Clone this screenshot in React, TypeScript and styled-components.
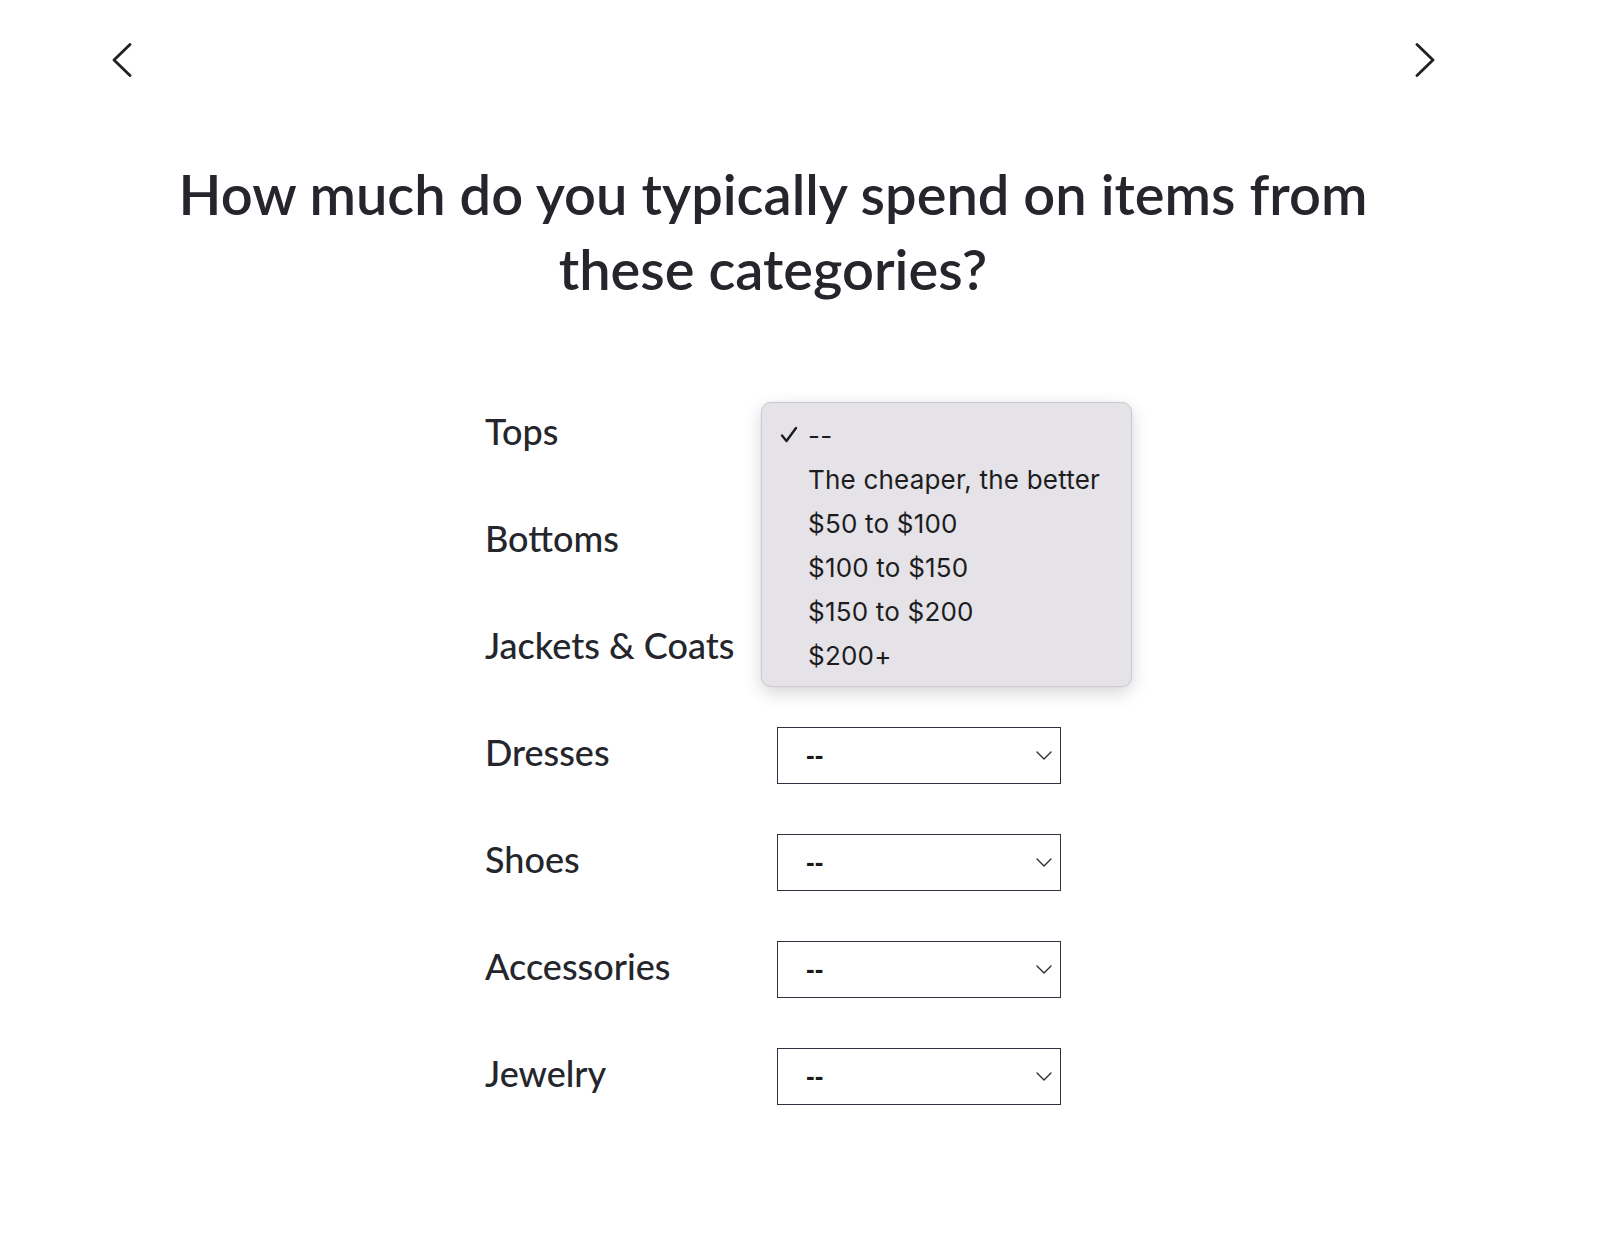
import React from "react";
import styled, { createGlobalStyle } from "styled-components";

const GlobalStyle = createGlobalStyle`
  html, body {
    margin: 0;
    padding: 0;
    background: #ffffff;
  }
  body {
    font-family: "Lato", "Noto Sans", sans-serif;
    color: #24262c;
  }
`;

const Page = styled.div`
  width: 1546px;
  min-height: 1234px;
  display: flex;
  flex-direction: column;
  align-items: center;
`;

const Nav = styled.nav`
  align-self: stretch;
  height: 120px;
  padding: 0 111px 0 112px;
  display: flex;
  align-items: center;
  justify-content: space-between;
`;

const NavButton = styled.button`
  border: 0;
  background: transparent;
  padding: 0;
  width: 20px;
  height: 34px;
  display: flex;
  align-items: center;
  justify-content: center;
  cursor: pointer;
  color: #1f2127;
`;

const Title = styled.h1`
  margin: 36px 0 0;
  font-size: 56px;
  line-height: 75px;
  font-weight: 600;
  text-align: center;
  color: #24262c;
  letter-spacing: 0;
`;

const Form = styled.div`
  margin-top: 100px;
  display: grid;
  grid-template-columns: 292px 284px;
  row-gap: 50px;
  align-items: center;
`;

const Label = styled.label`
  font-size: 36px;
  font-weight: 500;
  color: #24262c;
  line-height: 57px;
  margin-top: -6px;
`;

const SelectWrap = styled.div`
  position: relative;
  height: 57px;
`;

const SelectBox = styled.button`
  width: 284px;
  height: 57px;
  box-sizing: border-box;
  border: 1px solid #2d3240;
  background: #ffffff;
  padding: 0 8px 0 28px;
  display: flex;
  align-items: center;
  justify-content: space-between;
  font-family: "Liberation Sans", Arial, sans-serif;
  font-size: 26px;
  font-weight: 700;
  color: #1a1a1a;
  cursor: pointer;
`;

const Popup = styled.ul`
  position: absolute;
  left: -16px;
  top: -4px;
  z-index: 2;
  width: 371px;
  height: 285px;
  box-sizing: border-box;
  margin: 0;
  padding: 10px 0 11px;
  list-style: none;
  background: #e5e3e8;
  border: 1px solid #cdcbd0;
  border-radius: 10px;
  box-shadow: 0 6px 18px rgba(0, 0, 0, 0.16), 0 0 2px rgba(0, 0, 0, 0.08);
  font-family: "Inter", "Liberation Sans", sans-serif;
  font-size: 26px;
  letter-spacing: 0.2px;
  color: #1d1d1f;
`;

const Option = styled.li`
  height: 44px;
  display: flex;
  align-items: center;
  padding-left: 18px;
  white-space: nowrap;
`;

const Check = styled.span`
  width: 28px;
  display: flex;
  align-items: center;
`;

const ChevronLeft = () => (
  <svg width="20" height="34" viewBox="0 0 20 34" fill="none">
    <path d="M18 1.5 L2 17 L18 32.5" stroke="currentColor" strokeWidth="2.8" strokeLinecap="round" strokeLinejoin="round" />
  </svg>
);

const ChevronRight = () => (
  <svg width="20" height="34" viewBox="0 0 20 34" fill="none">
    <path d="M2 1.5 L18 17 L2 32.5" stroke="currentColor" strokeWidth="2.8" strokeLinecap="round" strokeLinejoin="round" />
  </svg>
);

const SmallChevron = () => (
  <svg width="16" height="9" viewBox="0 0 16 9" fill="none">
    <path d="M1 1 L8 8 L15 1" stroke="#2a2d36" strokeWidth="1.4" strokeLinecap="round" strokeLinejoin="round" />
  </svg>
);

const CheckMark = () => (
  <svg width="18" height="18" viewBox="0 0 18 18" fill="none">
    <path d="M2 9.5 L6.5 15 L16 2" stroke="#1d1d1f" strokeWidth="2.4" strokeLinecap="round" strokeLinejoin="round" />
  </svg>
);

const categories = ["Tops", "Bottoms", "Jackets & Coats", "Dresses", "Shoes", "Accessories", "Jewelry"];
const options = ["--", "The cheaper, the better", "$50 to $100", "$100 to $150", "$150 to $200", "$200+"];

export default function App() {
  return (
    <>
      <GlobalStyle />
      <Page>
        <Nav>
          <NavButton aria-label="Back"><ChevronLeft /></NavButton>
          <NavButton aria-label="Next"><ChevronRight /></NavButton>
        </Nav>
        <Title>
          How much do you typically spend on items from
          <br />
          these categories?
        </Title>
        <Form>
          {categories.map((c, i) => (
            <React.Fragment key={c}>
              <Label>{c}</Label>
              <SelectWrap>
                <SelectBox type="button">
                  <span>--</span>
                  <SmallChevron />
                </SelectBox>
                {i === 0 && (
                  <Popup role="listbox">
                    {options.map((o, j) => (
                      <Option key={o} role="option" aria-selected={j === 0}>
                        <Check>{j === 0 && <CheckMark />}</Check>
                        {o}
                      </Option>
                    ))}
                  </Popup>
                )}
              </SelectWrap>
            </React.Fragment>
          ))}
        </Form>
      </Page>
    </>
  );
}
